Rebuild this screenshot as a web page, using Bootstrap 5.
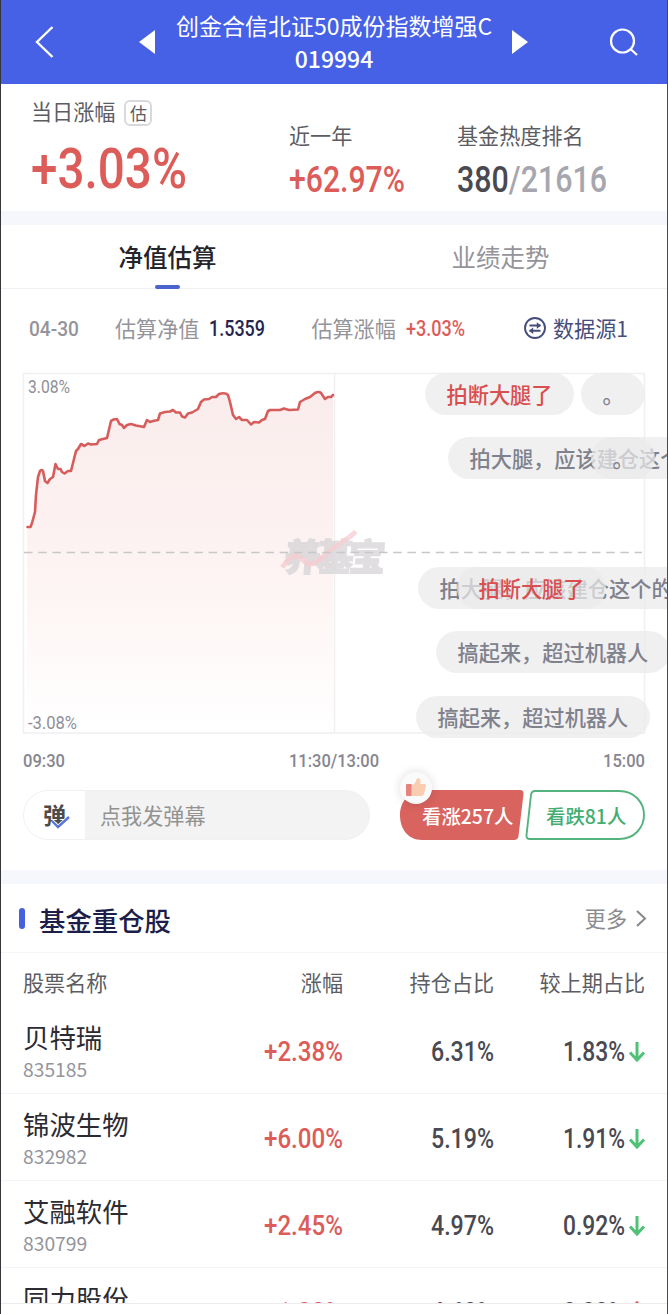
<!DOCTYPE html>
<html lang="zh-CN">
<head>
<meta charset="utf-8">
<meta name="viewport" content="width=device-width, initial-scale=1">
<title>创金合信北证50成份指数增强C</title>
<link href="https://cdn.jsdelivr.net/npm/bootstrap@5.3.0/dist/css/bootstrap.min.css" rel="stylesheet">
<style>
body{font-family:"Noto Sans CJK SC",sans-serif;font-size:21.1px;line-height:30px;color:#5c5c62;background:#fff;overflow:hidden}
.app{height:1314px;border-left:1px solid #35353c;border-right:1px solid #4a4a50;overflow:hidden}
svg{display:block;overflow:visible;flex:none}
.fig{font-family:Roboto,sans-serif;font-weight:500;fill:currentColor}
.topbar{height:84px;background:#4661e6;color:#fff;padding:0 29px 0 33px}
.fund{width:318px;font-size:23px;line-height:33px;white-space:nowrap;margin:0 19px 0 20px}
.fund small{display:block;font-size:inherit;font-weight:500}
.red{color:#dc5c5a}.ink{color:#494951}.mute{color:#94949a}.pale{color:#a6a6ae}
.stats{height:127px;padding-left:30px}
.est{width:28px;height:26px;border:2px solid #d9d9dd;border-radius:6px;font-size:17px;line-height:22px}
.band{height:14px;background:#f6f7fc}
.tabs{height:64px;border-bottom:1px solid #f1f1f3;font-size:24.5px}
.tabs .on{color:#24242a;font-weight:500}
.tabs .on::after{content:"";position:absolute;left:50%;bottom:-1px;width:25px;height:4px;margin-left:-12.5px;border-radius:2px;background:#4a63cf}
.quote{height:81px;padding:0 39px 4px 28px}
.source{color:#454e7c}
.chart{height:370px;overflow:hidden}
.danmu{position:absolute;height:42px;line-height:41px;padding:0 21.5px;border-radius:21px;background:rgba(234,234,234,.72);color:#7f818d;font-size:21.2px;font-weight:500;white-space:nowrap}
.danmu.hot{color:#d94f4f}
.axis{height:42px;padding:0 22px 2px;color:#868690}
.actions{height:88px;padding:8px 22px 0 22px}
.sendbox{width:347px;height:50px;border:1.5px solid #f1f1f3;border-radius:25px;overflow:hidden;background:#f3f3f3;color:#929292}
.toggle{width:61px;background:#fff;color:#4c4c4c;font-weight:700;font-size:23px;padding-bottom:3px}
.vote{height:50px;font-size:19.4px;font-weight:500;line-height:51px;white-space:nowrap}
.vote>svg{position:absolute;left:0;top:0}
.vote>span{position:relative}
.heading{height:69px;border-bottom:1px solid #f5f5f7;padding:0 21px 0 18px}
.heading h2{font-size:26.4px;font-weight:500;color:#1d1d4a;margin:3px 0 0 14px;line-height:36px}
.marker{width:6px;height:21px;border-radius:3px;background:#4661dc}
.holding{display:grid;grid-template-columns:200px 120px 151px 151px;padding:0 22px;text-align:right;align-items:center}
.holding>:first-child{text-align:left}
.colnames{height:54px;padding-top:3px}
.rows{height:297px;overflow:hidden;border-bottom:1px solid #ececef}
.stock{height:87px;border-bottom:1px solid #f4f4f6;padding-top:1px}
.stock svg{margin-left:auto}
.nm{font-size:26.4px;line-height:34px;color:#2b2b31;margin-top:2px}
.code{font-size:19.3px;line-height:28px;color:#94949b;padding-top:1px}
</style>
</head>
<body>
<main class="app">
<header class="topbar d-flex align-items-center">
  <svg width="20" height="32" viewBox="0 0 20 32" fill="none" stroke="#fff" stroke-width="2.4"><path d="M18.500 1 3 16l15.500 15"/></svg>
  <svg style="margin-left:85px" width="16" height="24"><path d="M0 12 16 0v24z" fill="#fff"/></svg>
  <div class="fund text-center">创金合信北证50成份指数增强C<small>019994</small></div>
  <svg width="16" height="24"><path d="M16 12 0 0v24z" fill="#fff"/></svg>
  <svg class="ms-auto" width="28" height="28" viewBox="0 0 28 28" fill="none" stroke="#fff" stroke-width="2.2"><circle cx="12.500" cy="13" r="11.500"/><path d="m20.500 21 6.500 6"/></svg>
</header>

<section class="stats d-flex">
  <div style="width:258px">
    <div class="d-flex align-items-center" style="padding-top:12px">当日涨幅<span class="est text-center" style="margin:4px 0 0 9px">估</span></div>
    <svg class="red" width="156" height="40" style="margin-top:22px"><text class="fig" x="0" y="40" font-size="56" textLength="156" lengthAdjust="spacingAndGlyphs">+3.03%</text></svg>
  </div>
  <div style="width:168px;padding-top:36px">近一年
    <svg class="red" width="116" height="26" style="margin-top:16px"><text class="fig" y="26" font-size="36.500" textLength="116" lengthAdjust="spacingAndGlyphs">+62.97%</text></svg>
  </div>
  <div style="padding-top:36px">基金热度排名
    <svg class="ink" width="150" height="26" style="margin-top:16px"><text class="fig" y="26" font-size="36.500" textLength="150" lengthAdjust="spacingAndGlyphs">380<tspan fill="#a6a6ae">/21616</tspan></text></svg>
  </div>
</section>
<div class="band"></div>

<nav class="tabs row g-0 text-center align-items-center">
  <div class="col-6 position-relative on h-100 d-flex align-items-center justify-content-center">净值估算</div>
  <div class="col-6 mute">业绩走势</div>
</nav>
<section class="quote d-flex align-items-center mute">
  <svg width="50" height="14"><text class="fig" y="15" font-size="20.500" textLength="50" lengthAdjust="spacingAndGlyphs">04-30</text></svg>
  <span style="margin-left:36px">估算净值</span>
  <svg width="56" height="15" style="margin-left:10px;color:#24244e"><text class="fig" y="15.500" font-size="21.500" textLength="56" lengthAdjust="spacingAndGlyphs">1.5359</text></svg>
  <span style="margin-left:46px">估算涨幅</span>
  <svg class="red" width="59" height="15" style="margin-left:10px"><text class="fig" y="15.500" font-size="21.500" textLength="59" lengthAdjust="spacingAndGlyphs">+3.03%</text></svg>
  <div class="source d-flex align-items-center ms-auto">
    <svg width="22" height="22" viewBox="0 0 22 22" fill="none" stroke="currentColor" stroke-width="1.900" style="margin-right:7px"><circle cx="11" cy="11" r="10"/><path d="M5.500 8.300h11M13 5v6.200M16.500 13.700h-11M9 10.800V17"  stroke="none"/><path d="M5.500 8.500h8.500M5.500 8.500h11M8 13.700h-2.500M5.500 13.700h11"/><path d="M12.800 5.200v6.600L17 8.500zM9.200 10.400V17L5 13.700z" fill="currentColor" stroke="none"/></svg>数据源1
  </div>
</section>

<section class="chart position-relative">
  <svg width="666" height="370" viewBox="1 370 666 370">
    <defs><linearGradient id="fade" x1="0" y1="393" x2="0" y2="733" gradientUnits="userSpaceOnUse"><stop offset="0" stop-color="#faecec"/><stop offset=".5" stop-color="#fdf3f2"/><stop offset="1" stop-color="#fff"/></linearGradient></defs>
    <path d="M27 527L30 527 35 512 38 476 40 471 43 471 45 481 48 483 50 479 53 477 56 464 58 469 60 469 64 473 71 471 76 451 81 444 97 444 99 440 107 438 112 420 117 419 124 428 129 425 144 427 147 420 149 422 158 420 160 413 173 410 180 412 184 417 188 413 198 409 203 400 215 397 220 394 227 394 229 398 234 417 246 420 251 424 258 422 264 420 269 410 297 410 300 402 318 392 325 399 333 395V733H27z" fill="url(#fade)"/>
    <path d="M23.500 373.500h621v359.500h-621zM334.500 373.500v359.500" fill="none" stroke="#f0f0f3" stroke-width="1.500"/>
    <g transform="translate(281 570.500) skewX(-4)" opacity=".75">
      <text x="2" y="0" font-size="37.500" font-weight="900" fill="#d6d4d7" stroke="#d6d4d7" stroke-width="1.200" textLength="102">养基宝</text>
      <path d="M1-3c6-10 12-14 16-11l10 8c8 0 14-8 21-14s17-11 24-19" fill="none" stroke="#f2bfc5" stroke-width="5" opacity=".8"/>
    </g>
    <path d="M24 552.500H642" stroke="#c8c8ca" stroke-width="1.700" stroke-dasharray="8.500 5.700"/>
    <path d="M27.500 527H30.500L32 523 35 512 36 495 38 477 40 471Q42 469 43 471L45 481 47.500 483 50 479 53 477 55.500 464 58 469 60.500 469 62 472 64.500 473.500 68 471 71 471 76 451 78 449 81 444 84.500 446 88 443.500 91 444.500 97 444 99 440 107 438 111 421Q113 419 117 419L119.500 424 122 425 124 428 127 425 131 424 136 425.500 144 427 147 420 150 422 153 421 158 420 160 413.500 165 412 170 411.500 173 410 176 412.500 180 412.500 182 416.500 185 417.500 188 413.500 192 412.500 198 409 201 402 204 399.500 209 399 212 397 216 397 219 394 Q225 392 228 395L230 402 233 415 236 419 239 417 242 420 247 420 251 424.500 254 422 259 422.500 262 420 265 419 268 411 270 410 280 410 284 408.500 289 410 298 409.500 300 402 305 399 310 397 315 393 Q319 391 321 393L325 399 328 397 331 397 333 395" fill="none" stroke="#d65d5b" stroke-width="2.600" stroke-linejoin="round" stroke-linecap="round"/>
    <g class="fig" style="font-weight:400;fill:#8f8f97" font-size="18.500">
      <text x="28" y="393" textLength="42" lengthAdjust="spacingAndGlyphs">3.08%</text>
      <text x="28" y="729" textLength="49" lengthAdjust="spacingAndGlyphs">-3.08%</text>
    </g>
  </svg>
  <div class="danmu hot" style="left:424px;top:3px">拍断大腿了</div>
  <div class="danmu" style="left:580px;top:3px">。</div>
  <div class="danmu" style="left:447px;top:67px">拍大腿，应该建仓这个的</div>
  <div class="danmu" style="left:590px;top:67px">。</div>
  <div class="danmu" style="left:417px;top:197px">拍大腿，应该建仓这个的</div>
  <div class="danmu hot" style="left:456px;top:197px">拍断大腿了</div>
  <div class="danmu" style="left:435px;top:261px">搞起来，超过机器人</div>
  <div class="danmu" style="left:415px;top:326px">搞起来，超过机器人</div>
</section>
<div class="axis d-flex align-items-center">
  <svg width="42" height="13"><text class="fig" y="13" font-size="18.500" textLength="42" lengthAdjust="spacingAndGlyphs">09:30</text></svg>
  <svg width="90" height="13" style="margin-left:224px"><text class="fig" y="13" font-size="18.500" textLength="90" lengthAdjust="spacingAndGlyphs">11:30/13:00</text></svg>
  <svg class="ms-auto" width="42" height="13"><text class="fig" y="13" font-size="18.500" textLength="42" lengthAdjust="spacingAndGlyphs">15:00</text></svg>
</div>

<section class="actions d-flex">
  <div class="sendbox d-flex">
    <div class="toggle position-relative d-flex align-items-center justify-content-center">弹
      <svg class="position-absolute" style="left:27px;top:25px" width="20" height="13" fill="none" stroke="#fff" stroke-width="4"><path d="m1 5 6 6L18 1"/><path d="m1 5 6 6L18 1" stroke="#5a76d6" stroke-width="2.400"/></svg>
    </div>
    <span class="align-self-center" style="padding-left:15px">点我发弹幕</span>
  </div>
  <div class="vote position-relative text-white" style="width:124px;margin-left:30px;padding-left:22px">
    <svg width="124" height="50"><path d="M25 0h95q4 0 3.500 4l-5 42q-.5 4-4.500 4H22C8 50 0 39 0 25S10 0 25 0z" fill="#d9635e"/></svg>
    <span>看涨257人</span>
    <svg style="left:0;top:-18px;filter:drop-shadow(0 0 5px rgba(0,0,0,.14))" width="32" height="32"><circle cx="16" cy="16" r="16" fill="#fbfafa"/></svg>
    <svg style="left:5px;top:-12px" width="22" height="20"><rect x="1" y="6" width="6" height="12" rx="1" fill="#e7837d"/><path d="M6.500 7.500Q11 5 11.500 1q3-2 4 1v4h4q2 0 1.500 2l-2 8q-.5 2-2.500 2H6.500z" fill="#f9cdb2"/></svg>
  </div>
  <div class="vote position-relative" style="width:120px;margin-left:1px;padding-left:21px;color:#43ad72">
    <svg width="120" height="50"><path d="M10 1h84c16 0 25 12 25 24S110 49 94 49H5q-4 0-3.500-4L6 5q.5-4 4-4z" fill="#fff" stroke="#54b37e" stroke-width="1.900"/></svg>
    <span>看跌81人</span>
  </div>
</section>
<div class="band"></div>

<section>
  <div class="heading d-flex align-items-center">
    <i class="marker"></i><h2>基金重仓股</h2>
    <span class="ms-auto" style="color:#8c8c90">更多</span>
    <svg width="10" height="17" style="margin-left:9px" fill="none" stroke="#88888c" stroke-width="2"><path d="m1 1 8 7.500-8 7.500"/></svg>
  </div>
  <div class="holding colnames"><span>股票名称</span><span>涨幅</span><span>持仓占比</span><span>较上期占比</span></div>
  <div class="rows">
    <div class="holding stock">
      <div><div class="nm">贝特瑞</div><div class="code">835185</div></div>
      <svg class="red" width="79" height="20"><text class="fig" y="20" font-size="27.500" textLength="79" lengthAdjust="spacingAndGlyphs">+2.38%</text></svg>
      <svg class="ink" width="63" height="20"><text class="fig" y="20" font-size="27.500" textLength="63" lengthAdjust="spacingAndGlyphs">6.31%</text></svg>
      <svg class="ink" width="82" height="20"><text class="fig" y="20" font-size="27.500" textLength="62" lengthAdjust="spacingAndGlyphs">1.83%</text><path d="M74 1v18m-7-7.500 7 7.500 7-7.500" fill="none" stroke="#4fc277" stroke-width="3"/></svg>
    </div>
    <div class="holding stock">
      <div><div class="nm">锦波生物</div><div class="code">832982</div></div>
      <svg class="red" width="79" height="20"><text class="fig" y="20" font-size="27.500" textLength="79" lengthAdjust="spacingAndGlyphs">+6.00%</text></svg>
      <svg class="ink" width="63" height="20"><text class="fig" y="20" font-size="27.500" textLength="63" lengthAdjust="spacingAndGlyphs">5.19%</text></svg>
      <svg class="ink" width="82" height="20"><text class="fig" y="20" font-size="27.500" textLength="62" lengthAdjust="spacingAndGlyphs">1.91%</text><path d="M74 1v18m-7-7.500 7 7.500 7-7.500" fill="none" stroke="#4fc277" stroke-width="3"/></svg>
    </div>
    <div class="holding stock">
      <div><div class="nm">艾融软件</div><div class="code">830799</div></div>
      <svg class="red" width="79" height="20"><text class="fig" y="20" font-size="27.500" textLength="79" lengthAdjust="spacingAndGlyphs">+2.45%</text></svg>
      <svg class="ink" width="63" height="20"><text class="fig" y="20" font-size="27.500" textLength="63" lengthAdjust="spacingAndGlyphs">4.97%</text></svg>
      <svg class="ink" width="82" height="20"><text class="fig" y="20" font-size="27.500" textLength="62" lengthAdjust="spacingAndGlyphs">0.92%</text><path d="M74 1v18m-7-7.500 7 7.500 7-7.500" fill="none" stroke="#4fc277" stroke-width="3"/></svg>
    </div>
    <div class="holding stock">
      <div><div class="nm">同力股份</div><div class="code">834599</div></div>
      <svg class="red" width="79" height="20"><text class="fig" y="20" font-size="27.500" textLength="79" lengthAdjust="spacingAndGlyphs">+1.22%</text></svg>
      <svg class="ink" width="63" height="20"><text class="fig" y="20" font-size="27.500" textLength="63" lengthAdjust="spacingAndGlyphs">4.62%</text></svg>
      <svg class="ink" width="82" height="20"><text class="fig" y="20" font-size="27.500" textLength="62" lengthAdjust="spacingAndGlyphs">0.22%</text><path d="M74 19V1m-7 7.500L74 1l7 7.500" fill="none" stroke="#dc5c5a" stroke-width="3"/></svg>
    </div>
  </div>
</section>
</main>
<script src="https://cdn.jsdelivr.net/npm/bootstrap@5.3.0/dist/js/bootstrap.bundle.min.js"></script>
</body>
</html>
